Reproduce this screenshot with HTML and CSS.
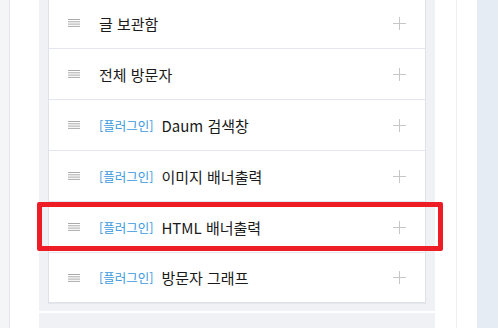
FILE: index.html
```html
<!DOCTYPE html>
<html lang="ko">
<head>
<meta charset="utf-8">
<link rel="stylesheet" href="styles.css">
</head>
<body>
<div class="rail"></div>
<div class="gutter"></div>
<div class="main">
  <div class="panel">
    <ul class="card">
      <li class="row"><span class="handle"><svg width="12" height="8" viewBox="0 0 12 8"><path d="M0 0.5H12M0 2.8H12M0 5.1H12M0 7.4H12" stroke="#aaaaaa" stroke-width="1"/></svg></span><span class="label">글 보관함</span><span class="plus"></span></li>
      <li class="row"><span class="handle"><svg width="12" height="8" viewBox="0 0 12 8"><path d="M0 0.5H12M0 2.8H12M0 5.1H12M0 7.4H12" stroke="#aaaaaa" stroke-width="1"/></svg></span><span class="label">전체 방문자</span><span class="plus"></span></li>
      <li class="row"><span class="handle"><svg width="12" height="8" viewBox="0 0 12 8"><path d="M0 0.5H12M0 2.8H12M0 5.1H12M0 7.4H12" stroke="#aaaaaa" stroke-width="1"/></svg></span><span class="tag">[플러그인]</span><span class="label">Daum 검색창</span><span class="plus"></span></li>
      <li class="row"><span class="handle"><svg width="12" height="8" viewBox="0 0 12 8"><path d="M0 0.5H12M0 2.8H12M0 5.1H12M0 7.4H12" stroke="#aaaaaa" stroke-width="1"/></svg></span><span class="tag">[플러그인]</span><span class="label">이미지 배너출력</span><span class="plus"></span></li>
      <li class="row highlighted"><span class="handle"><svg width="12" height="8" viewBox="0 0 12 8"><path d="M0 0.5H12M0 2.8H12M0 5.1H12M0 7.4H12" stroke="#aaaaaa" stroke-width="1"/></svg></span><span class="tag">[플러그인]</span><span class="label">HTML 배너출력</span><span class="plus"></span><span class="mark"></span></li>
      <li class="row last"><span class="handle"><svg width="12" height="8" viewBox="0 0 12 8"><path d="M0 0.5H12M0 2.8H12M0 5.1H12M0 7.4H12" stroke="#aaaaaa" stroke-width="1"/></svg></span><span class="tag">[플러그인]</span><span class="label">방문자 그래프</span><span class="plus"></span></li>
    </ul>
  </div>
  <div class="panel2"></div>
</div>
<div class="side"></div>
<div class="side2"></div>
<div class="blue"></div>
</body>
</html>
```
FILE: styles.css
```css
html, body {
  margin: 0;
  padding: 0;
}
body {
  width: 498px;
  height: 328px;
  overflow: hidden;
  display: flex;
  background: #fff;
  font-family: "Noto Sans CJK KR", "Noto Sans", sans-serif;
}
.rail {
  width: 9px;
  flex: none;
  background: #f4f5f7;
  border-right: 1px solid #e4e6ea;
}
.gutter {
  width: 29px;
  flex: none;
  background: #fff;
}
.main {
  width: 396px;
  flex: none;
  display: flex;
  flex-direction: column;
}
.panel {
  background: #eff1f5;
  padding: 0 9px 8px;
}
.panel2 {
  margin-top: 2px;
  flex: 1;
  background: #eff1f5;
}
.side {
  width: 21px;
  flex: none;
  border-right: 1px solid #eef0f3;
}
.side2 {
  width: 20px;
  flex: none;
}
.blue {
  width: 21px;
  flex: none;
  background: #e6ecf3;
}
.card {
  list-style: none;
  margin: -3px 0 0;
  padding: 0;
  background: #fff;
  border: 1px solid #dfe2e8;
  box-shadow: 0 1px 0 #e3e6eb;
}
.row {
  position: relative;
  height: 50px;
  display: flex;
  align-items: center;
  padding: 0 19px;
  border-bottom: 1px solid #e3e6ec;
}
.row.last {
  height: 49px;
  border-bottom: none;
}
.handle {
  width: 12px;
  height: 8px;
  display: flex;
  margin-right: 19px;
}
.tag {
  color: #3a98e0;
  font-size: 12.5px;
  margin-right: 8px;
}
.label {
  color: #1a1a1a;
  font-size: 15px;
  flex: 1;
}
.plus {
  position: relative;
  width: 13px;
  height: 13px;
}
.plus::before, .plus::after {
  content: "";
  position: absolute;
  background: #c6c6c6;
}
.plus::before {
  left: 0;
  right: 0;
  top: 6px;
  height: 1px;
}
.plus::after {
  top: 0;
  bottom: 0;
  left: 6px;
  width: 1px;
}
.mark {
  position: absolute;
  left: -12px;
  top: 0;
  width: 396px;
  height: 39px;
  border: 5px solid #ee1c25;
  border-radius: 2px;
}
```
